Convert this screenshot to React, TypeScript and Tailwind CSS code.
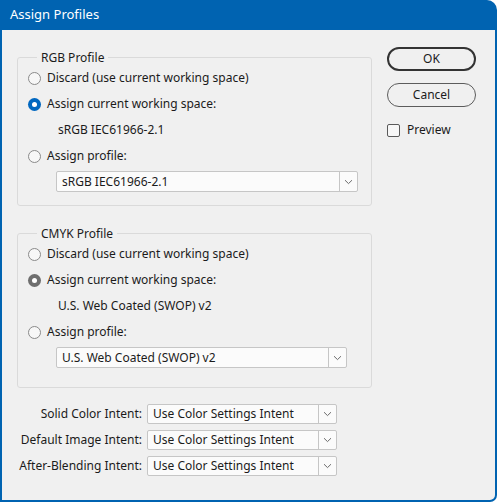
import type { ReactNode } from 'react'

const font = { fontFamily: '"Noto Sans", "Open Sans", sans-serif' }

function Radio({ checked, tone }: { checked?: boolean; tone?: 'blue' | 'grey' }) {
  if (checked) {
    return (
      <span
        className={`flex h-[13px] w-[13px] shrink-0 items-center justify-center rounded-full ${
          tone === 'grey' ? 'bg-[#6e6e6e]' : 'bg-[#0067c0]'
        }`}
      >
        <span className="h-[5px] w-[5px] rounded-full bg-white" />
      </span>
    )
  }
  return <span className="h-[13px] w-[13px] shrink-0 rounded-full border border-[#8a8a8a] bg-[#f7f7f7]" />
}

function RadioRow({ label, checked, tone }: { label: string; checked?: boolean; tone?: 'blue' | 'grey' }) {
  return (
    <div className="flex h-[26px] items-center gap-[6px]">
      <Radio checked={checked} tone={tone} />
      <span>{label}</span>
    </div>
  )
}

function Chevron() {
  return (
    <svg width="9" height="6" viewBox="0 0 9 6" fill="none">
      <path d="M1 1.2 4.5 4.6 8 1.2" stroke="#6b6b6b" strokeWidth="1" />
    </svg>
  )
}

function Select({ value, className }: { value: string; className: string }) {
  return (
    <div className={`flex rounded-[2px] border border-[#c6c6c6] bg-[#fbfbfb] ${className}`}>
      <div className="flex flex-1 items-center pl-[5px]">{value}</div>
      <div className="flex w-[18px] items-center justify-center border-l border-[#c6c6c6]">
        <Chevron />
      </div>
    </div>
  )
}

function Group({ title, children, className }: { title: string; children: ReactNode; className?: string }) {
  return (
    <fieldset className={`rounded-[3px] border border-[#dadada] pl-[10px] ${className ?? ''}`}>
      <legend className="ml-[9px] px-[4px] leading-[15px]">{title}</legend>
      {children}
    </fieldset>
  )
}

export default function App() {
  return (
    <div className="h-[502px] w-[497px] bg-white text-[12px] text-[#1b1b1b]" style={font}>
      <div className="flex h-full flex-col overflow-hidden rounded-tr-[10px] rounded-br-[7px] bg-[#0063b1]">
        <div className="flex h-[30px] shrink-0 items-center pl-[10px] text-[13px] text-white">Assign Profiles</div>
        <div className="mx-[2px] mb-[2px] flex flex-1 rounded-br-[5px] bg-[#f0f0f0]">
          {/* left column */}
          <div className="flex w-[370px] flex-col pl-[15px] pt-[20px]">
            <Group title="RGB Profile" className="pb-[13px]">
              <RadioRow label="Discard (use current working space)" />
              <RadioRow label="Assign current working space:" checked tone="blue" />
              <div className="flex h-[26px] items-center pl-[30px]">sRGB IEC61966-2.1</div>
              <RadioRow label="Assign profile:" />
              <Select value="sRGB IEC61966-2.1" className="ml-[28px] mr-[13px] mt-[2px] h-[21px]" />
            </Group>

            <Group title="CMYK Profile" className="mt-[20px] pb-[19px]">
              <RadioRow label="Discard (use current working space)" />
              <RadioRow label="Assign current working space:" checked tone="grey" />
              <div className="flex h-[26px] items-center pl-[30px]">U.S. Web Coated (SWOP) v2</div>
              <RadioRow label="Assign profile:" />
              <Select value="U.S. Web Coated (SWOP) v2" className="ml-[28px] mr-[24px] mt-[2px] h-[21px]" />
            </Group>

            <div className="mt-[16px] flex flex-col gap-[6px]">
              {['Solid Color Intent:', 'Default Image Intent:', 'After-Blending Intent:'].map((label) => (
                <div key={label} className="flex items-center">
                  <span className="w-[125px] text-right">{label}</span>
                  <Select value="Use Color Settings Intent" className="ml-[5px] h-[20px] w-[190px]" />
                </div>
              ))}
            </div>
          </div>

          {/* right column */}
          <div className="flex flex-col pl-[15px] pt-[17px]">
            <button className="flex h-[24px] w-[89px] items-center justify-center rounded-full border-2 border-[#333333] text-[#1b1b1b]">
              OK
            </button>
            <button className="mt-[12px] flex h-[24px] w-[89px] items-center justify-center rounded-full border border-[#5c5c5c] text-[#1b1b1b]">
              Cancel
            </button>
            <label className="mt-[14px] flex items-center gap-[7px]">
              <span className="h-[13px] w-[13px] rounded-[2px] border border-[#5a5a5a] bg-[#f7f7f7]" />
              <span>Preview</span>
            </label>
          </div>
        </div>
      </div>
    </div>
  )
}
